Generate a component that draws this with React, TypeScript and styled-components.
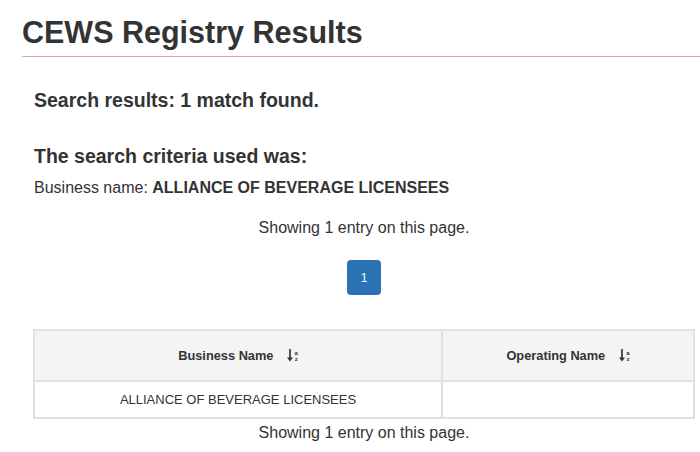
import React from 'react';
import styled, { createGlobalStyle } from 'styled-components';

const GlobalStyle = createGlobalStyle`
  body {
    margin: 0;
    background: #fff;
    font-family: "Liberation Sans", Arial, sans-serif;
    color: #333;
  }
`;

const Page = styled.div`
  padding-left: 22px;
`;

const Title = styled.h1`
  margin: 16px 0 0;
  padding-bottom: 7px;
  font-size: 30.5px;
  line-height: 33px;
  font-weight: 700;
  color: #333;
  border-bottom: 1px solid #e2a4a8;
`;

const Content = styled.div`
  margin: 0 5px 0 11px;
`;

const SectionHeading = styled.h2<{ $top: number }>`
  margin: ${p => p.$top}px 0 0 1px;
  font-size: 19.5px;
  line-height: 22px;
  font-weight: 700;
  color: #333;
`;

const Criteria = styled.p`
  margin: 10px 0 0 1px;
  font-size: 16px;
  line-height: 22px;
`;

const Showing = styled.p<{ $top: number }>`
  margin: ${p => p.$top}px 0 0;
  text-align: center;
  font-size: 16px;
  line-height: 22px;
`;

const Pager = styled.div`
  display: flex;
  justify-content: center;
  margin-top: 21px;
`;

const PageButton = styled.button`
  width: 34px;
  height: 35px;
  border: none;
  border-radius: 4px;
  background: #2a71b5;
  color: #fff;
  font-family: inherit;
  font-size: 12px;
  padding: 0;
  cursor: pointer;
`;

const Table = styled.table`
  width: 100%;
  margin-top: 34px;
  border-collapse: collapse;
  border: 2px solid #e1e1e1;
  font-size: 13px;
  table-layout: fixed;
`;

const HeadCell = styled.th`
  height: 49px;
  padding: 0 8px;
  background: #f4f4f4;
  border: 2px solid #e1e1e1;
  font-size: 12.8px;
  font-weight: 700;
  text-align: center;
`;

const Cell = styled.td`
  height: 35px;
  padding: 0 8px;
  border: 2px solid #e1e1e1;
  text-align: center;
`;

const HeadInner = styled.span`
  display: inline-flex;
  align-items: center;
  gap: 14px;
`;

const SortIcon = styled.span`
  display: inline-flex;
  align-items: center;
  gap: 1px;
  color: #333;
`;

const SortLetters = styled.span`
  display: flex;
  flex-direction: column;
  font-size: 6px;
  line-height: 6px;
  font-weight: 700;
`;

const SortAZ = () => (
  <SortIcon>
    <svg width="6" height="13" viewBox="0 0 6 13">
      <path d="M3 0v10" stroke="#333" strokeWidth="1.7" />
      <path d="M0 8.5L3 12.5L6 8.5Z" fill="#333" />
    </svg>
    <SortLetters>
      <span>a</span>
      <span>z</span>
    </SortLetters>
  </SortIcon>
);

export default function App() {
  return (
    <Page>
      <GlobalStyle />
      <Title>CEWS Registry Results</Title>
      <Content>
        <SectionHeading $top={32}>Search results: 1 match found.</SectionHeading>
        <SectionHeading $top={34}>The search criteria used was:</SectionHeading>
        <Criteria>
          Business name: <strong>ALLIANCE OF BEVERAGE LICENSEES</strong>
        </Criteria>
        <Showing $top={18}>Showing 1 entry on this page.</Showing>
        <Pager>
          <PageButton>1</PageButton>
        </Pager>
        <Table>
          <colgroup>
            <col style={{ width: 408 }} />
            <col />
          </colgroup>
          <thead>
            <tr>
              <HeadCell>
                <HeadInner>
                  Business Name <SortAZ />
                </HeadInner>
              </HeadCell>
              <HeadCell>
                <HeadInner>
                  Operating Name <SortAZ />
                </HeadInner>
              </HeadCell>
            </tr>
          </thead>
          <tbody>
            <tr>
              <Cell>ALLIANCE OF BEVERAGE LICENSEES</Cell>
              <Cell></Cell>
            </tr>
          </tbody>
        </Table>
        <Showing $top={3}>Showing 1 entry on this page.</Showing>
      </Content>
    </Page>
  );
}
